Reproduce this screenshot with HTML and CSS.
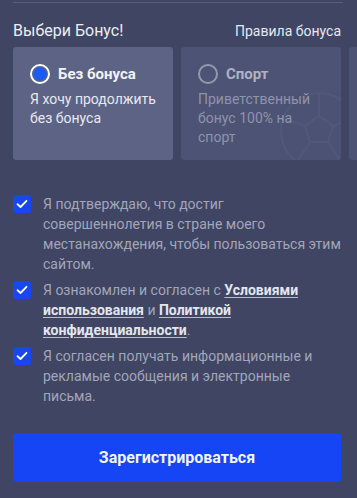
FILE: index.html
```html
<!DOCTYPE html>
<html lang="ru">
<head>
<meta charset="utf-8">
<link rel="stylesheet" href="styles.css">
</head>
<body>
<div class="page">
  <div class="topline"></div>
  <div class="header">
    <div class="title">Выбери Бонус!</div>
    <div class="rules">Правила бонуса</div>
  </div>
  <div class="cards">
    <div class="card selected">
      <div class="card-head"><span class="radio on"></span><span class="card-title">Без бонуса</span></div>
      <div class="card-desc">Я хочу продолжить без бонуса</div>
    </div>
    <div class="card">
      <svg class="deco" width="90" height="80" viewBox="0 0 90 80">
        <g fill="none" stroke="#566080" stroke-width="2" opacity="0.5">
          <circle cx="60" cy="45" r="38"/>
          <polygon points="60,30 74,40 69,56 51,56 46,40"/>
          <line x1="60" y1="30" x2="60" y2="8"/>
          <line x1="74" y1="40" x2="95" y2="32"/>
          <line x1="69" y1="56" x2="82" y2="76"/>
          <line x1="51" y1="56" x2="38" y2="76"/>
          <line x1="46" y1="40" x2="24" y2="32"/>
        </g>
      </svg>
      <div class="card-head"><span class="radio"></span><span class="card-title">Спорт</span></div>
      <div class="card-desc">Приветственный бонус 100% на спорт</div>
    </div>
    <div class="card"></div>
  </div>
  <div class="checks">
    <div class="check">
      <span class="box"><svg width="12" height="10" viewBox="0 0 12 10"><path d="M1.5 5.2 L4.5 8 L10.5 1.8" fill="none" stroke="#fff" stroke-width="1.8" stroke-linecap="round" stroke-linejoin="round"/></svg></span>
      <div class="check-text">Я подтверждаю, что достиг совершеннолетия в стране моего местанахождения, чтобы пользоваться этим сайтом.</div>
    </div>
    <div class="check">
      <span class="box"><svg width="12" height="10" viewBox="0 0 12 10"><path d="M1.5 5.2 L4.5 8 L10.5 1.8" fill="none" stroke="#fff" stroke-width="1.8" stroke-linecap="round" stroke-linejoin="round"/></svg></span>
      <div class="check-text">Я ознакомлен и согласен с <a class="link">Условиями</a> <a class="link">использования</a> и <a class="link">Политикой</a> <a class="link">конфиденциальности</a>.</div>
    </div>
    <div class="check">
      <span class="box"><svg width="12" height="10" viewBox="0 0 12 10"><path d="M1.5 5.2 L4.5 8 L10.5 1.8" fill="none" stroke="#fff" stroke-width="1.8" stroke-linecap="round" stroke-linejoin="round"/></svg></span>
      <div class="check-text">Я согласен получать информационные и рекламые сообщения и электронные письма.</div>
    </div>
  </div>
  <div class="btn">Зарегистрироваться</div>
</div>
</body>
</html>
```
FILE: styles.css
```css
html, body {
  margin: 0;
  padding: 0;
  background: #3f4562;
}
body {
  font-family: Roboto, "Noto Sans", sans-serif;
  width: 357px;
  height: 498px;
  overflow: hidden;
}
.page {
  padding: 2px 0 0 13px;
}
.topline {
  width: 330px;
  height: 1px;
  background: #575e7c;
}
.header {
  display: flex;
  justify-content: space-between;
  align-items: baseline;
  width: 328px;
  margin-top: 18px;
}
.title {
  color: #eceef4;
  font-size: 16px;
}
.rules {
  color: #e6e8ef;
  font-size: 14px;
}
.cards {
  display: flex;
  gap: 8px;
  margin-top: 7px;
  width: 344px;
  overflow: hidden;
}
.card {
  position: relative;
  flex: 0 0 160px;
  height: 113px;
  background: #4c5374;
  border-radius: 3px;
  padding: 17px 12px 0 17px;
  box-sizing: border-box;
  overflow: hidden;
}
.card.selected {
  background: #5d6384;
}
.deco {
  position: absolute;
  right: -8px;
  bottom: -6px;
}
.card-head {
  position: relative;
  display: flex;
  align-items: center;
  gap: 8px;
}
.radio {
  width: 16px;
  height: 16px;
  border: 2px solid #9599ae;
  border-radius: 50%;
  flex: 0 0 auto;
}
.radio.on {
  border-color: #ffffff;
  background: #1a5bf5;
  box-shadow: inset 0 0 0 1.5px #5d6384;
}
.card-title {
  font-size: 15px;
  font-weight: 700;
  color: #aeb2c4;
}
.selected .card-title {
  color: #f2f3f7;
}
.card-desc {
  position: relative;
  margin-top: 6px;
  font-size: 14px;
  line-height: 19px;
  color: #8f94ab;
}
.selected .card-desc {
  color: #e8e9f0;
}
.checks {
  display: flex;
  flex-direction: column;
  gap: 7px;
  margin-top: 35px;
  width: 330px;
}
.check {
  display: flex;
  gap: 12px;
  align-items: flex-start;
}
.box {
  flex: 0 0 18px;
  height: 18px;
  background: #1846ef;
  border-radius: 2px;
  display: flex;
  align-items: center;
  justify-content: center;
}
.check-text {
  font-size: 14px;
  line-height: 20px;
  color: #a2a6ba;
  margin-top: -1px;
}
.link {
  color: #e4e6ee;
  font-weight: 700;
  text-decoration: underline;
  text-decoration-color: #b9bccb;
  text-underline-offset: 2px;
}
.btn {
  margin-top: 27px;
  width: 328px;
  height: 49px;
  background: #1545f5;
  border-radius: 3px;
  display: flex;
  align-items: center;
  justify-content: center;
  color: #f2f4fb;
  font-size: 16px;
  font-weight: 700;
}
```
